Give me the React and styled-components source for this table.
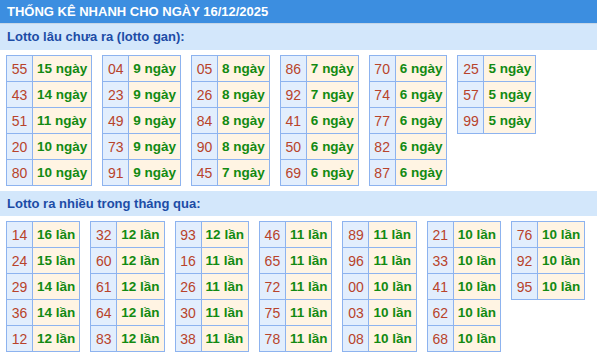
import { createGlobalStyle, styled } from "styled-components";

const gan = [
  [["55", 15], ["43", 14], ["51", 11], ["20", 10], ["80", 10]],
  [["04", 9], ["23", 9], ["49", 9], ["73", 9], ["91", 9]],
  [["05", 8], ["26", 8], ["84", 8], ["90", 8], ["45", 7]],
  [["86", 7], ["92", 7], ["41", 6], ["50", 6], ["69", 6]],
  [["70", 6], ["74", 6], ["77", 6], ["82", 6], ["87", 6]],
  [["25", 5], ["57", 5], ["99", 5]],
];

const nhieu = [
  [["14", 16], ["24", 15], ["29", 14], ["36", 14], ["12", 12]],
  [["32", 12], ["60", 12], ["61", 12], ["64", 12], ["83", 12]],
  [["93", 12], ["16", 11], ["26", 11], ["30", 11], ["38", 11]],
  [["46", 11], ["65", 11], ["72", 11], ["75", 11], ["78", 11]],
  [["89", 11], ["96", 11], ["00", 10], ["03", 10], ["08", 10]],
  [["21", 10], ["33", 10], ["41", 10], ["62", 10], ["68", 10]],
  [["76", 10], ["92", 10], ["95", 10]],
];

function App() {
  return (
    <>
      <GlobalStyle />
      <Page>
        <Header>THỐNG KÊ NHANH CHO NGÀY 16/12/2025</Header>
        <SectionTitle>Lotto lâu chưa ra (lotto gan):</SectionTitle>
        <Tables>
          {gan.map((group, i) => (
            <Table key={i}>
              <tbody>
                {group.map(([num, count]) => (
                  <tr key={num}>
                    <Num>{num}</Num>
                    <Value>{count} ngày</Value>
                  </tr>
                ))}
              </tbody>
            </Table>
          ))}
        </Tables>
        <SectionTitle $short>Lotto ra nhiều trong tháng qua:</SectionTitle>
        <Tables>
          {nhieu.map((group, i) => (
            <Table key={i}>
              <tbody>
                {group.map(([num, count]) => (
                  <tr key={num}>
                    <Num>{num}</Num>
                    <Value>{count} lần</Value>
                  </tr>
                ))}
              </tbody>
            </Table>
          ))}
        </Tables>
      </Page>
    </>
  );
}

const GlobalStyle = createGlobalStyle`
  body {
    margin: 0;
    background: #ffffff;
    font-family: "Liberation Sans", Arial, sans-serif;
  }
`;

const Page = styled.div`
  width: 597px;
`;

const Header = styled.div`
  height: 24px;
  line-height: 24px;
  padding: 0 7px;
  background: #3c8ee0;
  border-bottom: 1px solid #c6d6e6;
  box-sizing: border-box;
  color: #ffffff;
  font-size: 13px;
  font-weight: bold;
`;

const SectionTitle = styled.div`
  height: ${(p) => (p.$short ? "25px" : "26px")};
  line-height: ${(p) => (p.$short ? "25px" : "26px")};
  padding: 0 7px;
  background: #d3e7fb;
  color: #1c4ca6;
  font-size: 13px;
  font-weight: bold;
`;

const Tables = styled.div`
  display: flex;
  align-items: flex-start;
  gap: 10px;
  padding: 5px 6px;
`;

const Table = styled.table`
  border-collapse: collapse;
  border: 1px solid #8db3ef;
`;

const Num = styled.td`
  width: 25px;
  height: 25px;
  padding: 0;
  border: 1px solid #8db3ef;
  background: #e2eefd;
  color: #b8432b;
  font-size: 14px;
  text-align: center;
`;

const Value = styled.td`
  height: 25px;
  padding: 0 4px;
  border: 1px solid #8db3ef;
  background: #fff4e3;
  color: #128a12;
  font-size: 13.5px;
  font-weight: bold;
  white-space: nowrap;
`;

export default App;
